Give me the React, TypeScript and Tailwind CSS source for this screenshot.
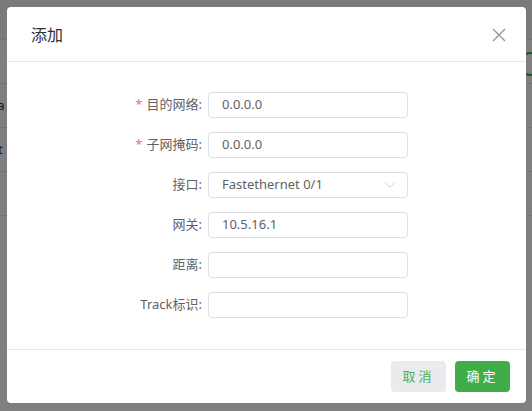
import { ChevronDown } from "lucide-react";

type Field = {
  label: string;
  required?: boolean;
  value: string;
  select?: boolean;
};

const fields: Field[] = [
  { label: "目的网络", required: true, value: "0.0.0.0" },
  { label: "子网掩码", required: true, value: "0.0.0.0" },
  { label: "接口", value: "Fastethernet 0/1", select: true },
  { label: "网关", value: "10.5.16.1" },
  { label: "距离", value: "" },
  { label: "Track标识", value: "" },
];

const font = {
  fontFamily: '"Noto Sans", "Noto Sans CJK SC", sans-serif',
};

const App = () => {
  return (
    <div
      className="relative w-[532px] h-[411px] overflow-hidden bg-white"
      style={font}
    >
      {/* page behind the dialog */}
      <div className="flex flex-col">
        <div className="h-[40px] bg-[#f4f4f4] border-b border-[#e6e6e6]" />
        <div className="h-[44px] border-b border-[#e6e6e6]" />
        <div className="h-[44px] border-b border-[#e6e6e6] flex items-center text-[13px] text-[#333]">
          <span className="-ml-[6px]">la</span>
        </div>
        <div className="h-[44px] border-b border-[#e6e6e6] flex items-center text-[13px] text-[#333]">
          <span className="-ml-[2px]">t</span>
        </div>
        <div className="h-[44px] border-b border-[#e6e6e6]" />
      </div>
      <div className="absolute right-[-10px] top-[52px] w-[24px] h-[24px] rounded-full border-2 border-[#3fae49]" />

      {/* overlay */}
      <div className="absolute inset-0 bg-black/50" />

      {/* dialog */}
      <div className="absolute left-[7px] top-[7px] w-[519px] h-[396px] bg-white rounded-[4px] flex flex-col">
        <div className="h-[55px] flex items-center justify-between pl-[24px] pr-[20px] border-b border-[#e8e8e8]">
          <span className="text-[16px] text-[#303133] pt-[2px]">添加</span>
          <svg width="14" height="14" viewBox="0 0 14 14" className="mt-[2px]">
            <path d="M1 1 L13 13 M13 1 L1 13" stroke="#909399" strokeWidth="1.3" />
          </svg>
        </div>

        <div className="flex-1 flex flex-col gap-[14px] pt-[30px]">
          {fields.map((f, i) => (
            <div key={i} className="flex items-center h-[26px]">
              <label className="w-[201px] pr-[6px] text-right text-[13px] text-[#606266]">
                {f.required && <span className="text-[#f56c6c] mr-[4px]">*</span>}
                {f.label}:
              </label>
              <div className="w-[200px] h-[26px] border border-[#dcdfe6] rounded-[4px] flex items-center justify-between pl-[13px] pr-[8px] text-[13px] text-[#606266]">
                <span>{f.value}</span>
                {f.select && <ChevronDown size={18} strokeWidth={1} color="#c0c4cc" />}
              </div>
            </div>
          ))}
        </div>

        <div className="h-[54px] border-t border-[#e8e8e8] flex items-center justify-end gap-[9px] pr-[16px]">
          <button className="w-[55px] h-[31px] rounded-[4px] bg-[#e9ebef] text-[#4caf50] text-[13px] tracking-[3px]">
            取消
          </button>
          <button className="w-[55px] h-[31px] rounded-[4px] bg-[#3fae49] text-white text-[13px] tracking-[3px]">
            确定
          </button>
        </div>
      </div>
    </div>
  );
};

export default App;
